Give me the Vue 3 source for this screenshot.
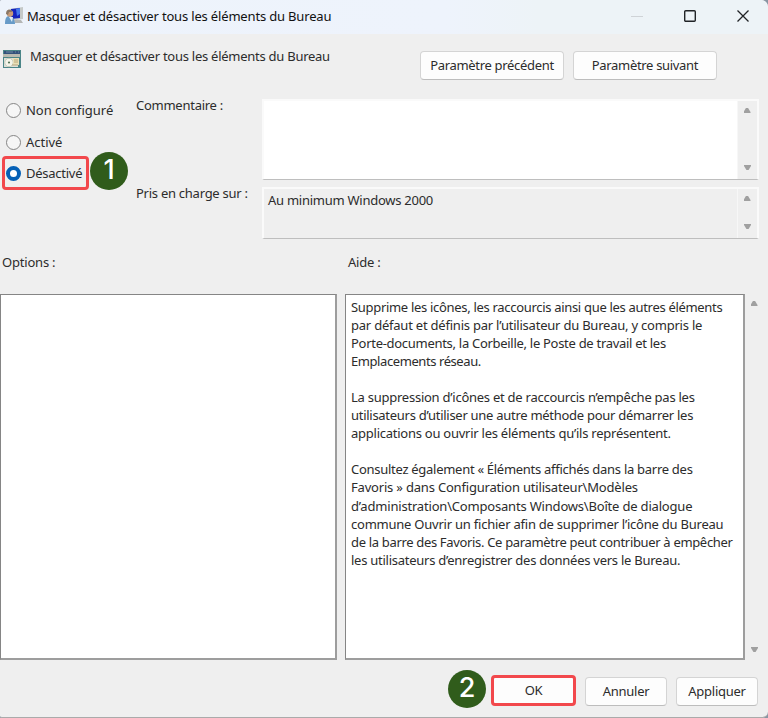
<script setup>
import { ref } from 'vue'

const title = 'Masquer et désactiver tous les éléments du Bureau'
const state = ref('off')
const states = [
  { id: 'none', label: 'Non configuré' },
  { id: 'on', label: 'Activé' },
  { id: 'off', label: 'Désactivé' },
]

// each line: text and its letter spacing in px
const help = [
  [
    ['Supprime les icônes, les raccourcis ainsi que les autres éléments', -0.31],
    ['par défaut et définis par l’utilisateur du Bureau, y compris le', -0.22],
    ['Porte-documents, la Corbeille, le Poste de travail et les', -0.29],
    ['Emplacements réseau.', -0.42],
  ],
  [
    ['La suppression d’icônes et de raccourcis n’empêche pas les', -0.25],
    ['utilisateurs d’utiliser une autre méthode pour démarrer les', -0.28],
    ['applications ou ouvrir les éléments qu’ils représentent.', -0.25],
  ],
  [
    ['Consultez également « Éléments affichés dans la barre des', -0.28],
    ['Favoris » dans Configuration utilisateur\\Modèles', -0.19],
    ['d’administration\\Composants Windows\\Boîte de dialogue', -0.19],
    ['commune Ouvrir un fichier afin de supprimer l’icône du Bureau', -0.23],
    ['de la barre des Favoris. Ce paramètre peut contribuer à empêcher', -0.33],
    ['les utilisateurs d’enregistrer des données vers le Bureau.', -0.26],
  ],
]
</script>

<template>
  <div class="window">
    <header class="titlebar">
      <svg class="app-icon" width="19" height="18" viewBox="0 0 19 18">
        <path d="M5 2 18 0v12l-12 2z" fill="#c5c9c8" />
        <path d="M6 2 15 1v10l-9 1z" fill="#1424bd" />
        <path d="M11 2 15 1v6l-3 2z" fill="#4579ec" />
        <path d="M9 13h7l2 3H10z" fill="#b4b6b5" />
        <path d="M0 17c0-5 1-8 4-8s6 3 6 8z" fill="#679bc8" />
        <path d="M4 10l3 5 1-5z" fill="#e0edf4" />
        <circle cx="5" cy="6.5" r="3.2" fill="#c99b78" />
        <path d="M1 7c0-6 6-5 6-2L4 5 3 8z" fill="#8a7765" />
      </svg>
      <span class="title">{{ title }}</span>
      <div class="controls">
        <svg width="12" height="12" viewBox="0 0 12 12"><path d="M0 6.5h12" stroke="#cfd3d7" /></svg>
        <svg width="12" height="12" viewBox="0 0 12 12"><rect x=".7" y=".7" width="10.6" height="10.6" rx="1" fill="none" stroke="#202326" stroke-width="1.4" /></svg>
        <svg width="12" height="12" viewBox="0 0 12 12"><path d="M.5.5l11 11M11.5.5l-11 11" stroke="#202326" stroke-width="1.3" /></svg>
      </div>
    </header>

    <section class="heading">
      <svg class="policy-icon" width="18" height="18" viewBox="0 0 18 18">
        <path d="M0 0h18v18H0z" fill="#4b8587" />
        <path d="M1 1h16v3H1z" fill="#34527b" />
        <path d="M3 2h7M12 2h1M15 2h1" stroke="#6f8ca4" />
        <path d="M0 4h17v3H0z" fill="#b9bab0" />
        <path d="M1 8h14v9H1z" fill="#dfdfd7" />
        <circle cx="6" cy="12.5" r="4.2" fill="#f5f4e9" stroke="#c3cbbb" />
        <circle cx="6" cy="12.5" r="1.1" fill="#557557" />
        <path d="M10 8h6v7h-6z" fill="#e9dfb7" />
        <path d="M11 10h4M11 12h4M9 15h6" stroke="#b9a77d" />
      </svg>
      <span class="policy-name">{{ title }}</span>
      <button class="nav prev">Paramètre précédent</button>
      <button class="nav next">Paramètre suivant</button>
    </section>

    <section class="settings">
      <div class="states">
        <label v-for="s in states" :key="s.id" class="state" :class="{ marked: s.id === 'off' }">
          <input v-model="state" type="radio" name="state" :value="s.id">
          <span>{{ s.label }}</span>
          <b v-if="s.id === 'off'" class="step">1</b>
        </label>
      </div>
      <div class="labels">
        <div class="comment-label">Commentaire :</div>
        <div class="support-label">Pris en charge sur :</div>
      </div>
      <div class="fields">
        <div class="field comment">
          <div class="scroll"><i class="up"></i><i class="down"></i></div>
        </div>
        <div class="field support">
          <span>Au minimum Windows 2000</span>
          <div class="scroll"><i class="up"></i><i class="down"></i></div>
        </div>
      </div>
    </section>

    <section class="captions">
      <span>Options :</span>
      <span>Aide :</span>
    </section>

    <section class="panels">
      <div class="panel"></div>
      <div class="panel help">
        <p v-for="(lines, i) in help" :key="i">
          <span v-for="[text, spacing] in lines" :key="text" :style="{ letterSpacing: spacing + 'px' }">{{ text }}</span>
        </p>
      </div>
      <div class="scroll help-scroll"><i class="up"></i><i class="down"></i></div>
    </section>

    <footer class="actions">
      <b class="step">2</b>
      <button class="ok">OK</button>
      <button class="cancel">Annuler</button>
      <button class="apply">Appliquer</button>
    </footer>
  </div>
</template>

<style>
body {
  background: #8995a3;
}
</style>

<style scoped>
* {
  box-sizing: border-box;
}

.window {
  width: 768px;
  height: 718px;
  display: flex;
  flex-direction: column;
  overflow: hidden;
  background: #efefef;
  border-bottom: 1px solid #aaa;
  border-radius: 2px 7px 6px 2px;
  color: #2c2c2c;
  font: 13px/18px "Noto Sans", "Open Sans", sans-serif;
  letter-spacing: -0.26px;
  white-space: nowrap;
}

.titlebar {
  height: 34px;
  flex: none;
  display: flex;
  align-items: center;
  padding: 0 19px 2px 5px;
  background: linear-gradient(90deg, #edf3fb, #eef3fc 58%, #edf3f7 70%);
}

.title {
  margin-left: 3px;
  color: #111;
  letter-spacing: -0.17px;
}

.controls {
  display: flex;
  gap: 41px;
  margin-left: auto;
}

.heading {
  height: 57px;
  flex: none;
  display: flex;
  align-items: flex-start;
  padding: 17px 0 0 3px;
}

.policy-icon {
  margin-top: -1px;
}

.policy-name {
  width: 390px;
  margin: -4px 0 0 9px;
}

button {
  height: 29px;
  padding: 0 0 1px;
  border: 1px solid #d4d4d4;
  border-bottom-color: #bdbdbd;
  border-radius: 4px;
  background: #fdfdfd;
  color: #2c2c2c;
  font: inherit;
  letter-spacing: inherit;
}

.nav {
  width: 144px;
  letter-spacing: -0.32px;
}

.next {
  margin-left: 9px;
}

.settings {
  height: 154px;
  flex: none;
  display: grid;
  grid-template-columns: 136px 126px 497px;
}

.states {
  padding: 3px 0 0 2px;
}

.state {
  height: 32px;
  display: flex;
  align-items: center;
  padding-left: 4px;
  letter-spacing: -0.03px;
}

.marked {
  position: relative;
  width: 87px;
  height: 34px;
  margin-top: -2px;
  padding-left: 1px;
  border: 3px solid #f2484c;
  border-radius: 4px;
  letter-spacing: -0.26px;
}

.marked .step {
  position: absolute;
  left: 85px;
  top: -7px;
}

input {
  appearance: none;
  width: 15px;
  height: 15px;
  flex: none;
  margin: 0 5px 0 0;
  border: 1px solid #858585;
  border-radius: 50%;
  background: #f6f6f6;
}

input:checked {
  border: 4.5px solid #0560b6;
  background: #fff;
}

.step {
  width: 38px;
  height: 38px;
  flex: none;
  border-radius: 50%;
  background: #305c1b;
  color: #fff;
  font: 500 27px/36px Inter, "Liberation Sans", sans-serif;
  letter-spacing: 0;
  text-align: center;
}

.comment-label {
  margin-top: 5px;
}

.support-label {
  margin-top: 70px;
}

.fields {
  padding-top: 8px;
}

.field {
  display: flex;
  border: 2px solid #fafafa;
  border-bottom: 1px solid #bebebe;
}

.comment {
  height: 81px;
  background: #fff;
}

.support {
  height: 52px;
  margin-top: 7px;
  padding-left: 4px;
}

.support > span {
  margin-top: 2px;
}

.scroll {
  width: 20px;
  display: flex;
  flex-direction: column;
  align-items: center;
  justify-content: space-between;
  margin-left: auto;
  padding: 7px 1px 9px 0;
  border-left: 1px solid #f7f7f7;
  background: #efefef;
}

.up,
.down {
  width: 7px;
  height: 5px;
  background: #a0a0a0;
  clip-path: polygon(35% 0, 65% 0, 100% 80%, 100% 100%, 0 100%, 0 80%);
}

.down {
  transform: rotate(180deg);
}

.captions {
  height: 49px;
  flex: none;
  display: grid;
  grid-template-columns: 346px 1fr;
  padding: 8px 0 0 2px;
  letter-spacing: -0.2px;
}

.panels {
  height: 366px;
  flex: none;
  display: grid;
  grid-template-columns: 337px 400px 18px;
  column-gap: 8px;
}

.help-scroll {
  width: auto;
  margin-left: -8px;
  padding: 7px 8px 8px 0;
  border: none;
}

.panel {
  border: 1px solid #858585;
  border-right: 2px solid #9d9d9d;
  border-bottom: 2px solid #9d9d9d;
  background: #fff;
}

.help {
  padding: 2.5px 0 0 5px;
  line-height: 18.1px;
}

.help p {
  margin: 0 0 18.1px;
}

.help p span {
  display: block;
}

.actions {
  display: flex;
  align-items: flex-start;
  padding: 10px 0 0 448px;
}

.actions button {
  width: 82px;
  margin: 7px 0 0 9px;
}

.actions .ok {
  width: 85px;
  height: 31px;
  margin: 5px 0 0 5px;
  border: 3px solid #f2484c;
}
</style>
